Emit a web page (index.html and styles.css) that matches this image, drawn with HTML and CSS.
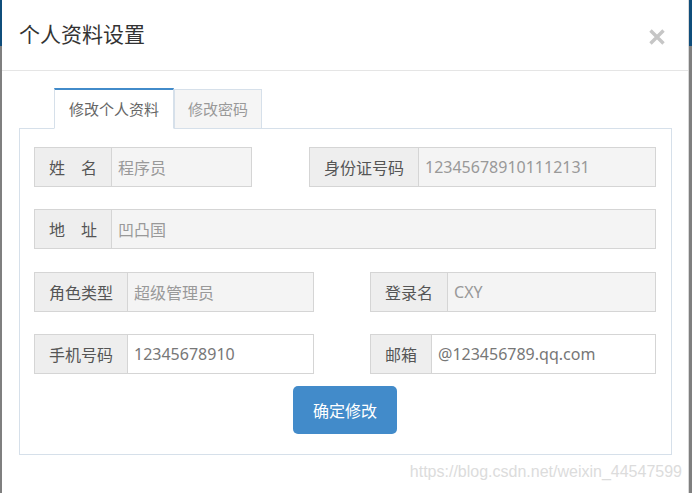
FILE: index.html
```html
<!DOCTYPE html>
<html lang="zh-CN">
<head>
    <meta charset="UTF-8">
    <meta name="viewport" content="width=device-width, initial-scale=1.0">
    <title>个人资料设置</title>
    <link rel="stylesheet" href="styles.css">
</head>
<body>
    <div class="modal">
        <!-- Header -->
        <div class="modal-header">
            <h4 class="modal-title">个人资料设置</h4>
            <span class="close">
                <svg width="16" height="16" viewBox="0 0 16 16"><path d="M1.5 1.5 L14.5 14.5 M14.5 1.5 L1.5 14.5" stroke="#c6c6c6" stroke-width="3.4" fill="none"/></svg>
            </span>
        </div>

        <!-- Body -->
        <div class="modal-body">
            <ul class="tabs">
                <li class="tab active">修改个人资料</li>
                <li class="tab">修改密码</li>
            </ul>

            <div class="tab-panel">
                <div class="form-row row-id">
                    <div class="input-group">
                        <span class="addon">姓　名</span>
                        <input type="text" value="程序员" disabled>
                    </div>
                    <div class="input-group">
                        <span class="addon">身份证号码</span>
                        <input type="text" value="123456789101112131" disabled>
                    </div>
                </div>

                <div class="form-row row-full">
                    <div class="input-group">
                        <span class="addon">地　址</span>
                        <input type="text" value="凹凸国" disabled>
                    </div>
                </div>

                <div class="form-row row-half">
                    <div class="input-group">
                        <span class="addon">角色类型</span>
                        <input type="text" value="超级管理员" disabled>
                    </div>
                    <div class="input-group">
                        <span class="addon">登录名</span>
                        <input type="text" value="CXY" disabled>
                    </div>
                </div>

                <div class="form-row row-half">
                    <div class="input-group">
                        <span class="addon">手机号码</span>
                        <input type="text" value="12345678910">
                    </div>
                    <div class="input-group">
                        <span class="addon">邮箱</span>
                        <input type="text" value="@123456789.qq.com">
                    </div>
                </div>

                <div class="actions">
                    <button type="button" class="btn">确定修改</button>
                </div>
            </div>
        </div>
    </div>

    <div class="watermark">https://blog.csdn.net/weixin_44547599</div>
</body>
</html>
```

FILE: styles.css
```css
/* Base */
html, body {
    margin: 0;
    padding: 0;
    height: 100%;
}

body {
    position: relative;
    overflow: hidden;
    font-family: "Noto Sans", "Noto Sans CJK SC", sans-serif;
    background: linear-gradient(#0f4d7b 0, #0f4d7b 46px, #7f7f7f 46px);
}

/* Modal */
.modal {
    margin-left: 2px;
    width: 686px;
    height: 100%;
    background: #fff;
    border-right: 1px solid #d9d9d9;
}

.modal-header {
    display: flex;
    align-items: center;
    height: 71px;
    padding: 0 23px 5px 17px;
    box-sizing: border-box;
    border-bottom: 1px solid #e5e5e5;
}

.modal-title {
    margin: 0;
    font-family: "Noto Sans CJK SC", sans-serif;
    font-size: 21px;
    font-weight: normal;
    color: #333;
}

.close {
    margin-left: auto;
    margin-top: 8px;
    display: flex;
}

.modal-body {
    padding: 17px 16px 0 17px;
}

/* Tabs */
.tabs {
    display: flex;
    align-items: flex-end;
    list-style: none;
    margin: 0 0 -1px 35px;
    padding: 0;
    position: relative;
    z-index: 1;
}

.tab {
    font-family: "Noto Sans CJK SC", sans-serif;
    font-size: 15px;
    line-height: 38px;
    padding: 0 13px;
    color: #999;
    background: #f5f5f5;
    border: 1px solid #d6e0ea;
}

.tab.active {
    padding: 0 14px;
    color: #666;
    background: #fff;
    border-top: 2px solid #428bca;
    border-bottom-color: #fff;
}

.tab-panel {
    border: 1px solid #d6e0ea;
    padding: 18px 15px 20px 14px;
}

/* Form rows */
.form-row {
    display: grid;
    grid-template-columns: 1fr;
    margin-bottom: 22px;
}

.row-full {
    margin-bottom: 23px;
}

.row-id {
    grid-template-columns: 218px 347px;
    justify-content: space-between;
}

.row-half {
    grid-template-columns: 280px 286px;
    justify-content: space-between;
}

.input-group {
    display: flex;
    height: 40px;
}

.addon {
    font-family: "Noto Sans CJK SC", sans-serif;
    font-size: 16px;
    line-height: 38px;
    padding: 0 14px;
    color: #555;
    background: #eee;
    border: 1px solid #d5d5d5;
    white-space: nowrap;
}

.input-group input {
    flex: 1;
    min-width: 0;
    margin: 0;
    padding: 0 6px;
    font-family: "Noto Sans", "Noto Sans CJK SC", sans-serif;
    font-size: 16px;
    color: #777;
    background: #fff;
    border: 1px solid #d5d5d5;
    border-left: none;
    outline: none;
}

.input-group input:disabled {
    color: #999;
    background: #f4f4f4;
}

/* Button */
.actions {
    display: flex;
    justify-content: center;
    margin-top: -10px;
}

.btn {
    height: 48px;
    padding: 0 20px;
    font-family: "Noto Sans CJK SC", sans-serif;
    font-size: 16px;
    color: #fff;
    background: #428bca;
    border: none;
    border-radius: 5px;
    cursor: pointer;
}

.watermark {
    position: absolute;
    right: 10px;
    top: 463px;
    font-family: "Liberation Sans", sans-serif;
    font-size: 16px;
    color: #dcdcdc;
}
```
